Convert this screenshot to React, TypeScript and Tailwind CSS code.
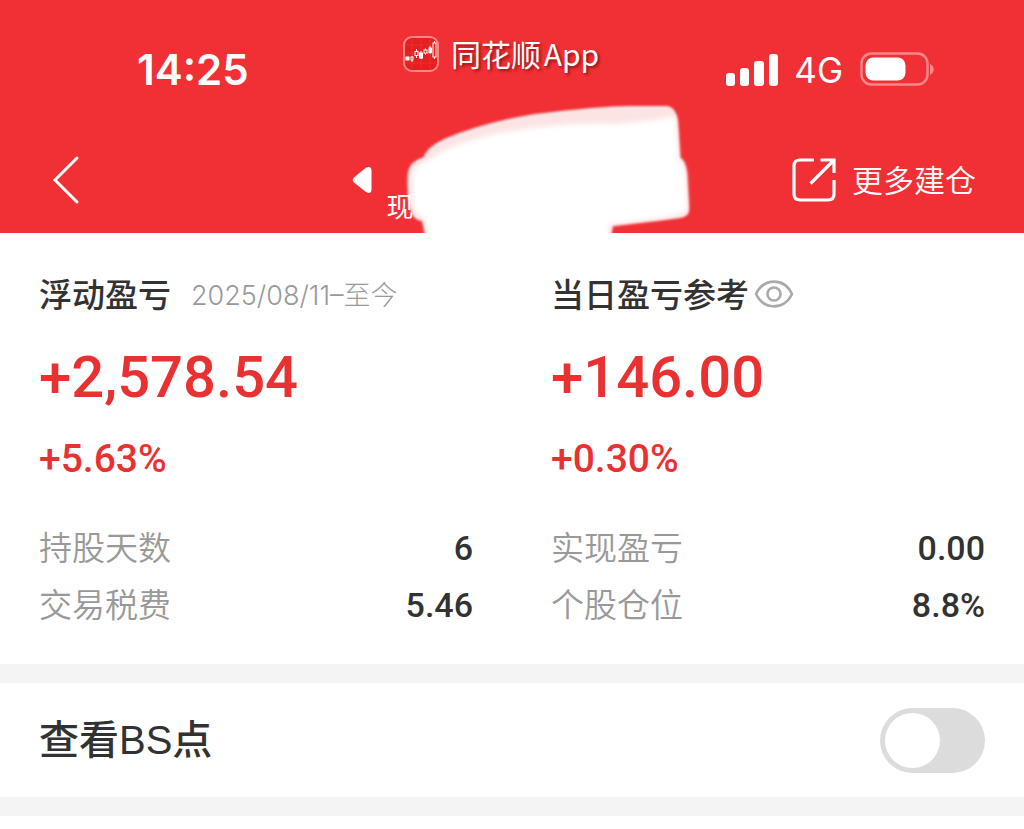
import React, { useState } from "react";

const sans = "font-[Inter,'Noto_Sans_CJK_SC',sans-serif]";
const cjk = "pb-[3px] font-['Noto_Sans_CJK_SC',sans-serif]";
const num = "font-[Roboto,'Noto_Sans_CJK_SC',sans-serif]";

function AppLogo() {
  return (
    <svg width="36" height="36" viewBox="0 0 36 36" fill="none" aria-hidden="true">
      <rect x="1" y="1" width="34" height="34" rx="8" fill="#e3201f" stroke="#fb8688" strokeWidth="2" />
      <path d="M3 9H33M3 18H33M3 27H33M9 3V33M18 3V33M27 3V33" stroke="#ec3a3a" strokeWidth=".6" />
      <g stroke="#fff" strokeWidth="1">
        <path d="M9 20v6M13.500 13v9M18 15v8M22.500 12v7M27 10v8M31.500 5v18" />
        <rect x="3" y="21" width="3" height="3" fill="#fff" />
        <rect x="8" y="21" width="2" height="3" fill="#e3201f" />
        <rect x="12" y="15.500" width="3" height="4" fill="#e3201f" />
        <rect x="16.500" y="17" width="3" height="5" fill="#fff" />
        <rect x="21" y="14" width="3" height="3" fill="#e3201f" />
        <rect x="26" y="12" width="2.500" height="4.500" fill="#fff" />
        <rect x="30" y="7" width="3" height="14" fill="#e3201f" />
      </g>
    </svg>
  );
}

function StatusBar() {
  return (
    <div className="grid h-[60px] grid-cols-[1fr_auto_1fr] items-center pl-[68px] pr-[90px]">
      <time className={`${sans} pl-[69px] text-[42px] font-semibold leading-none`}>14:25</time>
      <div className="flex h-7 items-center gap-3 self-start">
        <AppLogo />
        <span className={`${cjk} whitespace-nowrap text-[30px] leading-none [text-shadow:2px_2px_3px_rgba(90,0,0,0.6)]`}>
          同花顺 <span className="-ml-1">App</span>
        </span>
      </div>
      <div className="flex items-center justify-end">
        <svg width="52" height="34" viewBox="0 0 52 34" fill="#fff" aria-label="信号">
          <rect x="0" y="20" width="9" height="13" rx="3" />
          <rect x="14" y="15" width="9" height="18" rx="3" />
          <rect x="28" y="8" width="10" height="25" rx="3" />
          <rect x="43" y="1" width="9" height="32" rx="3" />
        </svg>
        <span className={`${sans} ml-4 mr-4 text-[35px] leading-none`}>4G</span>
        <svg width="75" height="36" viewBox="0 0 75 36" fill="none" aria-label="电池">
          <rect x="2.500" y="1.500" width="66" height="31" rx="10" stroke="#f98689" strokeWidth="2.500" />
          <rect x="6.500" y="5.500" width="40" height="23" rx="8" fill="#fff" />
          <path d="M71 12c5 2 5 8.500 0 11z" fill="#f98689" />
        </svg>
      </div>
    </div>
  );
}

function Smudge() {
  return (
    <svg className="pointer-events-none absolute inset-0 size-full overflow-visible" viewBox="352 127 338 106" aria-hidden="true">
      <defs>
        <filter id="soft" x="-10%" y="-10%" width="120%" height="120%">
          <feGaussianBlur stdDeviation="1.300" />
        </filter>
        <filter id="softer" x="-10%" y="-10%" width="120%" height="120%">
          <feGaussianBlur stdDeviation="2.500" />
        </filter>
        <clipPath id="headerEdge">
          <rect x="352" y="90" width="400" height="143" />
        </clipPath>
      </defs>
      <g clipPath="url(#headerEdge)" fill="#fff">
        <path
          filter="url(#soft)"
          opacity=".87"
          d="M408 172Q410 161 424 157Q426 148 444 139Q485 122 535 114Q600 106 630 106H666Q676 106 678 122L680 158Q686 160 687 175L689 208Q690 217 680 218L613 226L611 236H426L422 221Q412 220 410 208Q406 190 408 172Z"
        />
        <path
          filter="url(#softer)"
          d="M412 176Q416 163 430 160Q446 145 500 133Q560 122 615 124Q650 122 675 116L679 160Q686 165 686 180L687 208Q686 214 660 218L609 224L608 240H427L425 218Q413 215 413 200Z"
        />
      </g>
    </svg>
  );
}

function NavBar() {
  return (
    <nav className="mt-[27px] grid h-[106px] grid-cols-[1fr_auto_1fr] items-center pl-[52px] pr-[35px]">
      <button type="button" aria-label="返回" className="w-7">
        <svg width="28" height="48" viewBox="0 0 28 48" fill="none" stroke="#fff" strokeWidth="3" strokeLinecap="round">
          <path d="M25 2L3 24l22 22" />
        </svg>
      </button>
      <button type="button" aria-label="上一只" className="relative flex h-[106px] w-[338px] items-center gap-[15px]">
        <svg width="20" height="28" viewBox="0 0 20 28" fill="#fff" aria-hidden="true">
          <path d="M2 11.500L14 1.500Q19 -.5 19.500 4V24Q19 28.500 14 26L2 16.500Q-.5 14 2 11.500Z" />
        </svg>
        <span className="self-end pb-[13px] font-['Noto_Sans_CJK_SC',sans-serif] text-[27px] leading-7">现</span>
        <Smudge />
      </button>
      <button type="button" className="mr-[13px] flex items-center gap-4 justify-self-end">
        <svg width="44" height="44" viewBox="0 0 44 44" fill="none" stroke="#fff" strokeWidth="3.200" aria-hidden="true">
          <path d="M22 2H8Q2 2 2 8V36Q2 42 8 42H36Q42 42 42 36V22" />
          <path d="M28.500 2H42V15M42 2L18.500 25.500" />
        </svg>
        <span className={`${cjk} whitespace-nowrap text-[31px] font-[350] leading-none`}>更多建仓</span>
      </button>
    </nav>
  );
}

type Row = { label: string; value: string };
type PanelProps = { title: string; extra: React.ReactNode; amount: string; percent: string; rows: Row[] };

function Panel({ title, extra, amount, percent, rows }: PanelProps) {
  return (
    <section>
      <div className="flex h-12 items-center">
        <h2 className={`${cjk} whitespace-nowrap text-[33px] font-medium leading-none text-[#323232]`}>{title}</h2>
        {extra}
      </div>
      <p className={`${num} mt-[22px] h-[72px] text-[58px] font-medium leading-[72px] text-[#ea3131]`}>{amount}</p>
      <p className={`${num} mt-[22px] h-12 text-[39px] font-medium leading-[48px] text-[#ea3131]`}>{percent}</p>
      <dl className="mt-9">
        {rows.map((row) => (
          <div key={row.label} className="flex h-[57px] items-center justify-between">
            <dt className={`${cjk} text-[33px] font-[350] leading-none text-[#999]`}>{row.label}</dt>
            <dd className={`${num} text-[34px] font-medium leading-none text-[#323232]`}>{row.value}</dd>
          </div>
        ))}
      </dl>
    </section>
  );
}

export default function App() {
  const [showPoints, setShowPoints] = useState(false);
  return (
    <div className="min-h-screen bg-white">
      <header className="bg-[#f03035] pt-10 text-white">
        <StatusBar />
        <NavBar />
      </header>
      <main>
        <div className="grid grid-cols-2 gap-[78px] px-[39px] pb-[31px] pt-[38px]">
          <Panel
            title="浮动盈亏"
            extra={<span className={`${sans} ml-5 whitespace-nowrap text-[27px] font-light leading-none text-[#999]`}>2025/08/11–至今</span>}
            amount="+2,578.54"
            percent="+5.63%"
            rows={[
              { label: "持股天数", value: "6" },
              { label: "交易税费", value: "5.46" },
            ]}
          />
          <Panel
            title="当日盈亏参考"
            extra={
              <button type="button" aria-label="隐藏金额" className="ml-[5px]">
                <svg width="40" height="30" viewBox="0 0 40 30" fill="none" stroke="#aaa" strokeWidth="2.600">
                  <path d="M2 14C10-2.500 30-2.500 38 14C30 30.500 10 30.500 2 14Z" />
                  <circle cx="20" cy="14" r="6.500" />
                </svg>
              </button>
            }
            amount="+146.00"
            percent="+0.30%"
            rows={[
              { label: "实现盈亏", value: "0.00" },
              { label: "个股仓位", value: "8.8%" },
            ]}
          />
        </div>
        <div className="border-y-[19px] border-[#f4f4f4]">
          <label className="flex h-[114px] items-center justify-between px-[39px]">
            <span className="font-['Liberation_Sans','Noto_Sans_CJK_SC',sans-serif] text-[40px] font-medium leading-none text-[#323232]">
              查看BS点
            </span>
            <input
              type="checkbox"
              role="switch"
              checked={showPoints}
              onChange={(e) => setShowPoints(e.target.checked)}
              className="flex h-[65px] w-[105px] shrink-0 appearance-none items-center rounded-full bg-[#dcdcdc] px-[5px] before:size-[55px] before:rounded-full before:bg-white checked:justify-end checked:bg-[#f03035]"
            />
          </label>
        </div>
      </main>
    </div>
  );
}
